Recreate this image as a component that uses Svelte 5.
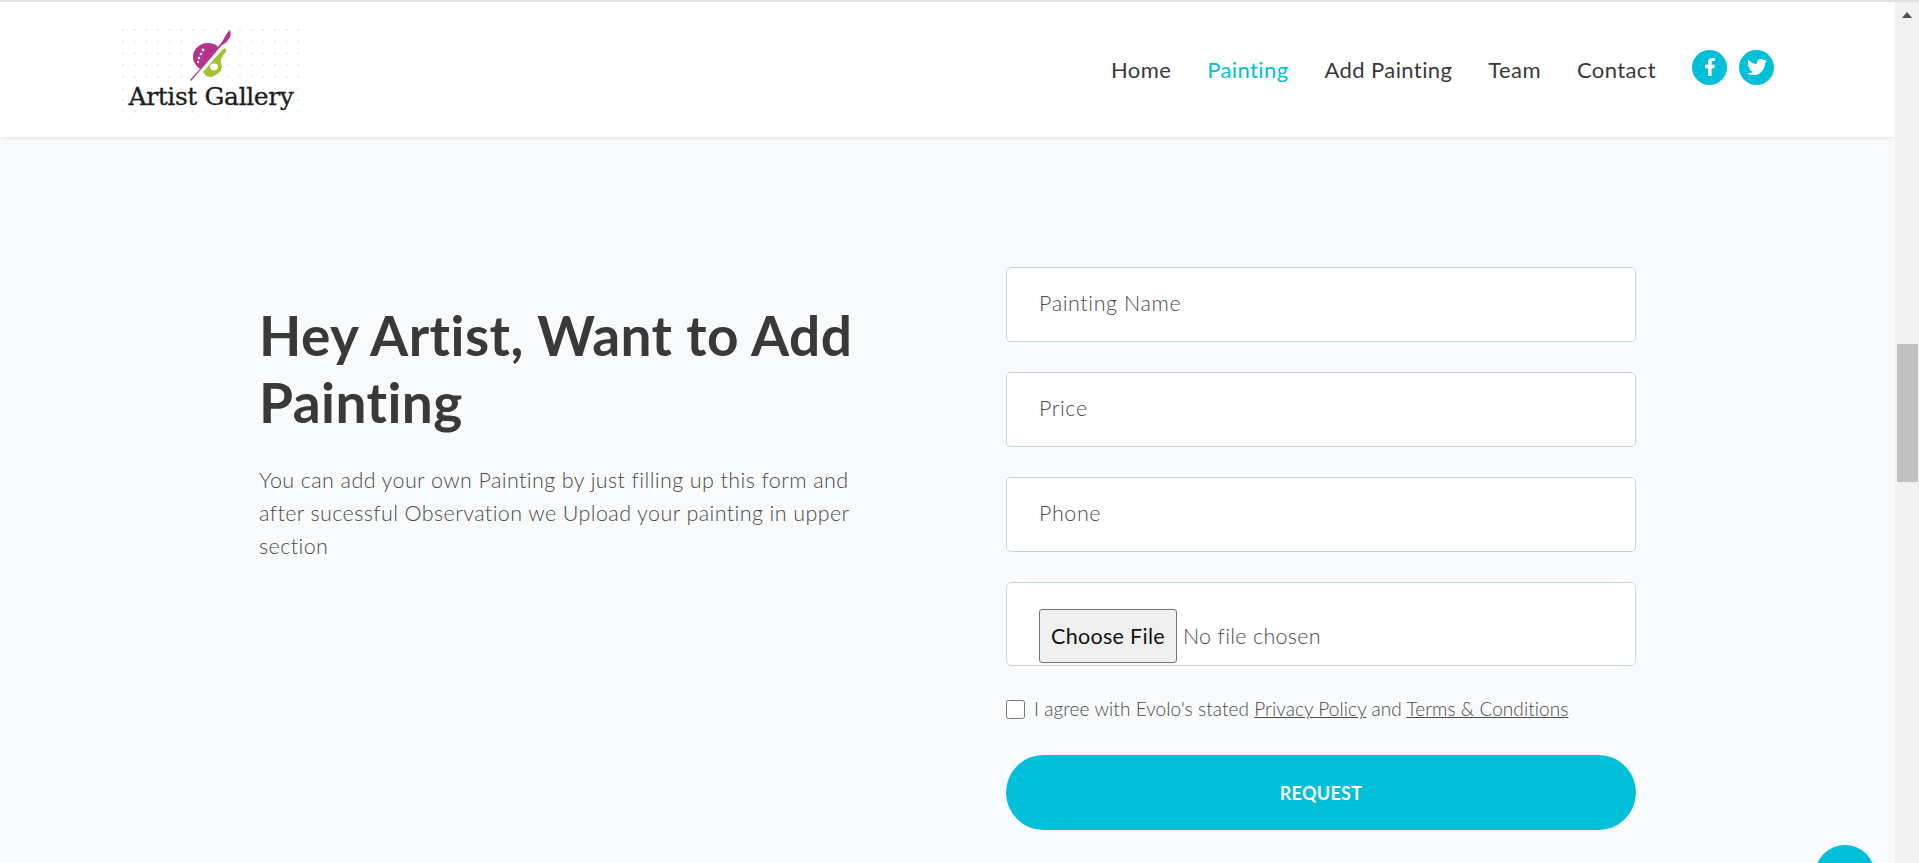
<script>
	const links = [
		{ label: 'Home', active: false },
		{ label: 'Painting', active: true },
		{ label: 'Add Painting', active: false },
		{ label: 'Team', active: false },
		{ label: 'Contact', active: false }
	];
	const fields = ['Painting Name', 'Price', 'Phone'];
</script>

<div class="shell">
	<div class="page">
		<header class="topbar">
			<a class="logo" href="#top">
				<svg class="palette" viewBox="188 28 46 54" aria-hidden="true">
					<path fill="#b5338a" d="M190 80L200 69C195 65 193 61 193 57C193 49 200 43 208 43C212 43 216 44 218 47L222 42C224 39 225 35 230 30C231 34 231 37 228 40C226 43 224 44 222 45L191 81Z" />
					<path fill="#a4c031" d="M203 72L222 50C225 47 227 49 226 52C222 56 220 60 221 63C224 70 218 75 211 77C207 77 205 75 203 72Z" />
					<ellipse cx="214" cy="67" rx="4" ry="3.4" fill="#fff" />
					<circle cx="203" cy="50" r="1.4" fill="#fff" />
					<circle cx="201" cy="54" r="1.3" fill="#fff" />
					<circle cx="199" cy="58" r="1.3" fill="#fff" />
					<circle cx="198" cy="62" r="1.2" fill="#fff" />
				</svg>
				<span class="logo-text">Artist Gallery</span>
			</a>
			<nav class="links">
				{#each links as link}
					<a class="link" class:active={link.active} href="#top">{link.label}</a>
				{/each}
			</nav>
			<div class="socials">
				<a class="social" href="#top" aria-label="Facebook">
					<svg viewBox="0 0 320 512" width="12" height="18">
						<path fill="#fff" d="M279.14 288l14.22-92.66h-88.91v-60.13c0-25.35 12.42-50.06 52.24-50.06h40.42V6.26S260.43 0 225.36 0c-73.22 0-121.08 44.38-121.08 124.72v70.62H22.89V288h81.39v224h100.17V288z" />
					</svg>
				</a>
				<a class="social" href="#top" aria-label="Twitter">
					<svg viewBox="0 0 512 512" width="20" height="20">
						<path fill="#fff" d="M459.37 151.716c.325 4.548.325 9.097.325 13.645 0 138.72-105.583 298.558-298.558 298.558-59.452 0-114.68-17.219-161.137-47.106 8.447.974 16.568 1.299 25.34 1.299 49.055 0 94.213-16.568 130.274-44.832-46.132-.975-84.792-31.188-98.112-72.772 6.498.974 12.995 1.624 19.818 1.624 9.421 0 18.843-1.3 27.614-3.573-48.081-9.747-84.143-51.98-84.143-102.985v-1.299c13.969 7.797 30.214 12.67 47.431 13.319-28.264-18.843-46.781-51.005-46.781-87.391 0-19.492 5.197-37.36 14.294-52.954 51.655 63.675 129.3 105.258 216.365 109.807-1.624-7.797-2.599-15.918-2.599-24.04 0-57.828 46.782-104.934 104.934-104.934 30.213 0 57.502 12.67 76.67 33.137 23.715-4.548 46.456-13.32 66.599-25.34-7.798 24.366-24.366 44.833-46.132 57.827 21.117-2.273 41.584-8.122 60.426-16.243-14.292 20.791-32.161 39.308-52.628 54.253z" />
					</svg>
				</a>
			</div>
		</header>

		<main class="section">
			<div class="intro">
				<h2>Hey Artist, Want to Add Painting</h2>
				<p>You can add your own Painting by just filling up this form and after sucessful Observation we Upload your painting in upper section</p>
			</div>
			<form class="request" onsubmit={(e) => e.preventDefault()}>
				{#each fields as field}
					<input class="field" type="text" placeholder={field} />
				{/each}
				<div class="field upload">
					<input type="file" />
				</div>
				<label class="terms">
					<input type="checkbox" />
					<span>I agree with Evolo's stated <a href="#top">Privacy Policy</a> and <a href="#top">Terms &amp; Conditions</a></span>
				</label>
				<button class="submit" type="submit">REQUEST</button>
			</form>
		</main>

		<a class="to-top" href="#top" aria-label="Back to top"></a>
	</div>

	<div class="scrollbar" aria-hidden="true">
		<span class="arrow"></span>
		<span class="thumb"></span>
	</div>
</div>

<style>
	:global(body) {
		margin: 0;
		overflow: hidden;
		font-family: Lato, 'Open Sans', sans-serif;
	}

	.shell {
		display: grid;
		grid-template-columns: 1fr 24px;
		height: 863px;
		overflow: hidden;
		border-top: 2px solid #e2e2e2;
		box-sizing: border-box;
	}

	.page {
		position: relative;
		background: #f9fafc;
		overflow: hidden;
	}

	.topbar {
		display: flex;
		align-items: center;
		height: 135px;
		padding: 0 121px 0 122px;
		background: #fff;
		box-shadow: 0 0 6px rgba(0, 0, 0, 0.14);
		box-sizing: border-box;
	}

	.logo {
		display: flex;
		flex-direction: column;
		align-items: center;
		box-sizing: border-box;
		width: 178px;
		height: 90px;
		margin-right: auto;
		margin-top: 7px;
		text-decoration: none;
		background-image: radial-gradient(circle, #ececec 1px, transparent 1.4px);
		background-size: 11.7px 11.7px;
		background-position: -4.85px -3.85px;
	}

	.palette {
		display: block;
		width: 46px;
		height: 54px;
	}

	.logo-text {
		margin-top: 1px;
		font-family: 'DejaVu Serif', serif;
		font-size: 25px;
		line-height: 28px;
		color: #1d1d1d;
		letter-spacing: -0.4px;
		white-space: nowrap;
		-webkit-text-stroke: 0.3px #1d1d1d;
	}

	.links {
		display: flex;
		gap: 36px;
	}

	.link {
		font-size: 22px;
		font-weight: 400;
		line-height: 30px;
		letter-spacing: 0.4px;
		color: #393939;
		text-decoration: none;
	}

	.link.active {
		color: #00bfd8;
	}

	.socials {
		display: flex;
		gap: 12px;
		margin-left: 36px;
		margin-top: -5px;
	}

	.social {
		display: flex;
		align-items: center;
		justify-content: center;
		width: 35px;
		height: 35px;
		border-radius: 50%;
		background: #00bfd8;
	}

	.section {
		display: grid;
		grid-template-columns: 747px 630px;
		padding: 130px 0 0 259px;
	}

	.intro {
		padding-top: 35px;
	}

	h2 {
		width: 640px;
		margin: 0 0 28px;
		font-size: 55px;
		font-weight: 700;
		line-height: 67px;
		letter-spacing: 0.45px;
		color: #393939;
	}

	p {
		width: 600px;
		margin: 0;
		font-size: 21.5px;
		font-weight: 300;
		line-height: 33px;
		letter-spacing: 0.4px;
		color: #4a4a4a;
	}

	.request {
		display: flex;
		flex-direction: column;
	}

	.field {
		box-sizing: border-box;
		width: 630px;
		height: 75px;
		margin-bottom: 30px;
		padding: 0 32px 3px;
		background: #fff;
		border: 1px solid #c4d8dc;
		border-radius: 5px;
		font-family: inherit;
		font-size: 21.5px;
		font-weight: 300;
		letter-spacing: 0.6px;
		color: #4a4a4a;
		outline: none;
	}

	.field::placeholder {
		color: #4a4a4a;
		opacity: 1;
	}

	.upload {
		height: 84px;
		margin-bottom: 0;
		padding-top: 26px;
		overflow: hidden;
	}

	.upload input {
		display: block;
		font-family: inherit;
		font-size: 21.5px;
		font-weight: 300;
		letter-spacing: 0.3px;
		color: #4a4a4a;
		line-height: 1.4;
	}

	.upload input::file-selector-button {
		height: 54px;
		padding: 0 11px;
		margin-right: 6px;
		font-family: inherit;
		font-size: 21.5px;
		font-weight: 400;
		letter-spacing: 0.3px;
		color: #111;
		background: #efefef;
		border: 1px solid #767676;
		border-radius: 3px;
	}

	.terms {
		display: flex;
		align-items: center;
		gap: 9px;
		margin-top: 30px;
		font-size: 19px;
		font-weight: 300;
		line-height: 26px;
		letter-spacing: 0.08px;
		color: #4a4a4a;
	}

	.terms input {
		width: 19px;
		height: 19px;
		margin: 0;
	}

	.terms a {
		color: inherit;
	}

	.submit {
		width: 630px;
		height: 75px;
		margin-top: 33px;
		background: #00bfd8;
		border: 0;
		border-radius: 38px;
		font-family: inherit;
		font-size: 18px;
		font-weight: 700;
		letter-spacing: 0.3px;
		color: #fff;
	}

	.to-top {
		position: absolute;
		left: 1815px;
		top: 843px;
		width: 60px;
		height: 60px;
		border-radius: 50%;
		background: #00bfd8;
	}

	.scrollbar {
		position: relative;
		background: #f1f1f1;
	}

	.arrow {
		position: absolute;
		left: 7px;
		top: 10px;
		border-left: 5px solid transparent;
		border-right: 5px solid transparent;
		border-bottom: 6px solid #505050;
	}

	.thumb {
		position: absolute;
		left: 2px;
		top: 342px;
		width: 21px;
		height: 138px;
		background: #c1c1c1;
	}
</style>
